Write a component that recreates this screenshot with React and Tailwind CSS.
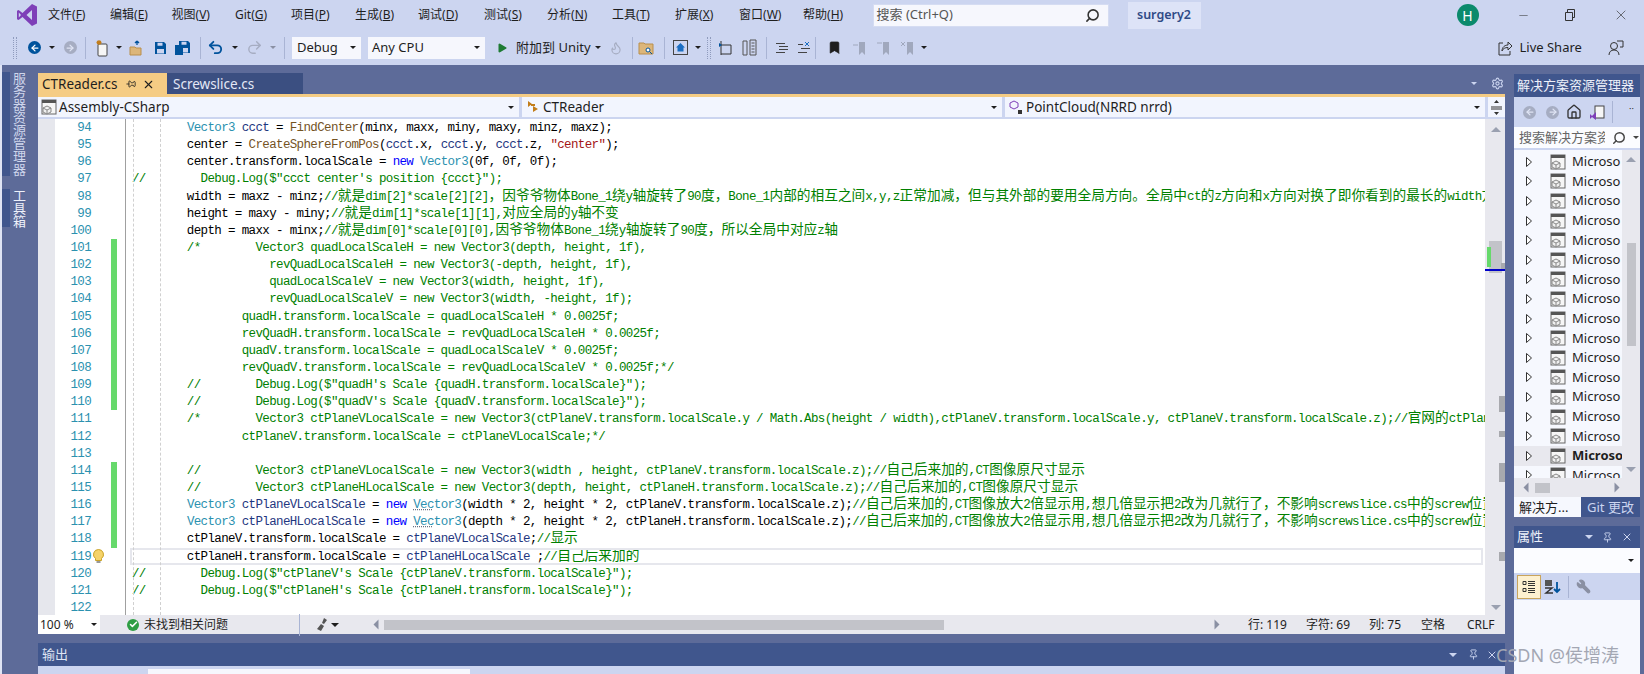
import React from 'react'
import { Search, X, Minus, ArrowLeft, ArrowRight, Undo2, Redo2, Play, Flame, Bookmark, Settings, Home, Wrench, Pin, Check } from 'lucide-react'

const UI = "font-['Noto_Sans','Noto_Sans_CJK_SC',sans-serif]"
const CJK = "font-['Noto_Sans_CJK_SC',sans-serif] text-[13.7px] leading-[12px] tracking-normal"

// token colours
const T = 'text-[#2b91af]'
const L = 'text-[#1f377f]'
const K = 'text-[#0000ff]'
const M = 'text-[#74531f]'
const S = 'text-[#a31515]'
const C = 'text-[#008000]'
const P = 'text-[#000000]'
const U = 'text-[#2b91af] underline decoration-dotted decoration-gray-500'

const I8 = '        '
const I16 = I8 + I8

const lines = [
  { n: 94, s: [[P, I8], [T, 'Vector3'], [P, ' '], [L, 'ccct'], [P, ' = '], [M, 'FindCenter'], [P, '(minx, maxx, miny, maxy, minz, maxz);']] },
  { n: 95, s: [[P, I8 + 'center = '], [M, 'CreateSphereFromPos'], [P, '('], [L, 'ccct'], [P, '.x, '], [L, 'ccct'], [P, '.y, '], [L, 'ccct'], [P, '.z, '], [S, '"center"'], [P, ');']] },
  { n: 96, s: [[P, I8 + 'center.transform.localScale = '], [K, 'new'], [P, ' '], [T, 'Vector3'], [P, '(0f, 0f, 0f);']] },
  { n: 97, s: [[C, '//' + I8 + 'Debug.Log($"ccct center\'s position {ccct}");']] },
  { n: 98, s: [[P, I8 + 'width = maxz - minz;'], [C, '//就是dim[2]*scale[2][2]，因爷爷物体Bone_1绕y轴旋转了90度，Bone_1内部的相互之间x,y,z正常加减，但与其外部的要用全局方向。全局中ct的z方向和x方向对换了即你看到的最长的width方向']] },
  { n: 99, s: [[P, I8 + 'height = maxy - miny;'], [C, '//就是dim[1]*scale[1][1],对应全局的y轴不变']] },
  { n: 100, s: [[P, I8 + 'depth = maxx - minx;'], [C, '//就是dim[0]*scale[0][0],因爷爷物体Bone_1绕y轴旋转了90度，所以全局中对应z轴']] },
  { n: 101, ch: 1, s: [[C, I8 + '/*' + I8 + 'Vector3 quadLocalScaleH = new Vector3(depth, height, 1f),']] },
  { n: 102, ch: 1, s: [[C, I16 + '    revQuadLocalScaleH = new Vector3(-depth, height, 1f),']] },
  { n: 103, ch: 1, s: [[C, I16 + '    quadLocalScaleV = new Vector3(width, height, 1f),']] },
  { n: 104, ch: 1, s: [[C, I16 + '    revQuadLocalScaleV = new Vector3(width, -height, 1f);']] },
  { n: 105, ch: 1, s: [[C, I16 + 'quadH.transform.localScale = quadLocalScaleH * 0.0025f;']] },
  { n: 106, ch: 1, s: [[C, I16 + 'revQuadH.transform.localScale = revQuadLocalScaleH * 0.0025f;']] },
  { n: 107, ch: 1, s: [[C, I16 + 'quadV.transform.localScale = quadLocalScaleV * 0.0025f;']] },
  { n: 108, ch: 1, s: [[C, I16 + 'revQuadV.transform.localScale = revQuadLocalScaleV * 0.0025f;*/']] },
  { n: 109, ch: 1, s: [[C, I8 + '//' + I8 + 'Debug.Log($"quadH\'s Scale {quadH.transform.localScale}");']] },
  { n: 110, ch: 1, s: [[C, I8 + '//' + I8 + 'Debug.Log($"quadV\'s Scale {quadV.transform.localScale}");']] },
  { n: 111, s: [[C, I8 + '/*' + I8 + 'Vector3 ctPlaneVLocalScale = new Vector3(ctPlaneV.transform.localScale.y / Math.Abs(height / width),ctPlaneV.transform.localScale.y, ctPlaneV.transform.localScale.z);//官网的ctPlaneV']] },
  { n: 112, s: [[C, I16 + 'ctPlaneV.transform.localScale = ctPlaneVLocalScale;*/']] },
  { n: 113, s: [] },
  { n: 114, ch: 1, s: [[C, I8 + '//' + I8 + 'Vector3 ctPlaneVLocalScale = new Vector3(width , height, ctPlaneV.transform.localScale.z);//自己后来加的,CT图像原尺寸显示']] },
  { n: 115, ch: 1, s: [[C, I8 + '//' + I8 + 'Vector3 ctPlaneHLocalScale = new Vector3(depth, height, ctPlaneH.transform.localScale.z);//自己后来加的,CT图像原尺寸显示']] },
  { n: 116, ch: 1, s: [[P, I8], [T, 'Vector3'], [P, ' '], [L, 'ctPlaneVLocalScale'], [P, ' = '], [K, 'new'], [P, ' '], [U, 'Vec'], [T, 'tor3'], [P, '(width * 2, height * 2, ctPlaneV.transform.localScale.z);'], [C, '//自己后来加的,CT图像放大2倍显示用,想几倍显示把2改为几就行了，不影响screwslice.cs中的screw位置']] },
  { n: 117, ch: 1, s: [[P, I8], [T, 'Vector3'], [P, ' '], [L, 'ctPlaneHLocalScale'], [P, ' = '], [K, 'new'], [P, ' '], [U, 'Vec'], [T, 'tor3'], [P, '(depth * 2, height * 2, ctPlaneH.transform.localScale.z);'], [C, '//自己后来加的,CT图像放大2倍显示用,想几倍显示把2改为几就行了，不影响screwslice.cs中的screw位置']] },
  { n: 118, ch: 1, s: [[P, I8 + 'ctPlaneV.transform.localScale = '], [L, 'ctPlaneVLocalScale'], [P, ';'], [C, '//显示']] },
  { n: 119, cur: 1, s: [[P, I8 + 'ctPlaneH.transform.localScale = '], [L, 'ctPlaneHLocalScale'], [P, ' ;'], [C, '//自己后来加的']] },
  { n: 120, s: [[C, '//' + I8 + 'Debug.Log($"ctPlaneV\'s Scale {ctPlaneV.transform.localScale}");']] },
  { n: 121, s: [[C, '//' + I8 + 'Debug.Log($"ctPlaneH\'s Scale {ctPlaneH.transform.localScale}");']] },
  { n: 122, s: [] },
]

const menus = [
  ['文件', 'F', 'w-[62px]'], ['编辑', 'E', 'w-[61.5px]'], ['视图', 'V', 'w-[63.5px]'], ['Git', 'G', 'w-[56px]'],
  ['项目', 'P', 'w-[64px]'], ['生成', 'B', 'w-[63px]'], ['调试', 'D', 'w-[66px]'], ['测试', 'S', 'w-[63px]'],
  ['分析', 'N', 'w-[65px]'], ['工具', 'T', 'w-[63px]'], ['扩展', 'X', 'w-[64px]'], ['窗口', 'W', 'w-[64px]'], ['帮助', 'H', 'w-[48px]'],
]

// split a string so Chinese runs get the full width font
const Code = ({ text }) =>
  text.split(/([\u3000-\u303f\u4e00-\u9fff\uff00-\uffef]+)/).map((part, i) =>
    i % 2 ? <span key={i} className={CJK}>{part}</span> : <span key={i}>{part}</span>
  )

const Caret = ({ className = '', color = 'border-t-[#1e1e1e]' }) => (
  <span className={`inline-block w-0 h-0 border-x-[3px] border-x-transparent border-t-[3px] shrink-0 ${color} ${className}`} />
)

const Sep = ({ className = '' }) => <span className={`w-px h-[22px] bg-[#a9b4d4] shrink-0 ${className}`} />

const Grip = ({ className = '' }) => (
  <span className={`w-[4px] h-[22px] shrink-0 border-x border-dotted border-[#8f9bbd] ${className}`} />
)

const VsLogo = () => (
  <svg width="22" height="24" viewBox="0 0 22 24">
    <path d="M16 1l5 2.4v17.2L16 23 6.5 14 2.6 17 1 16.2V7.8L2.6 7l3.9 3L16 1zM16 7l-5.500 5 5.500 5V7zM2.800 9.500v5L5 12 2.800 9.500z" fill="#7e3fb8" />
  </svg>
)

const FileCube = ({ dark }) => (
  <svg width="16" height="16" viewBox="0 0 16 16" fill="none">
    <rect x="1" y="1" width="14" height="14" fill="#f6f6f6" stroke={dark ? '#444' : '#666'} />
    <rect x="1" y="1" width="14" height="3" fill="#555" />
    <path d="M6 7l4 2v4l-4 2-4-2V9l4-2zM2 9l4 2 4-2M6 11v4" stroke="#888" fill="#efefef" />
  </svg>
)

const NewItem = () => (
  <svg width="14" height="18" viewBox="0 0 14 18" fill="none">
    <rect x="3" y="5" width="9" height="12" rx="1" stroke="#444" fill="#f6f6f6" />
    <path d="M4 1v5M1.500 3.500h5M2 2l4 3M6 2L2 5" stroke="#c27d1a" strokeWidth="1.200" />
  </svg>
)

const OpenFolder = () => (
  <svg width="16" height="17" viewBox="0 0 16 17">
    <path d="M1 8h5l1 1h5v7H1z" fill="#dcb67a" stroke="#b98f4d" />
    <path d="M8 6V2m0 0L6 4m2-2l2 2" stroke="#00539c" strokeWidth="1.300" fill="none" />
  </svg>
)

const Save = ({ x = 0 }) => (
  <path transform={`translate(${x} 0)`} d="M1 1h9l2 2v10H1zM3.500 1.800v3h5v-3zM3 8v4.500h7V8z" fill="#00539c" fillRule="evenodd" />
)

const MiniTool = ({ kind }) => {
  // small grey editor toolbar glyphs
  if (kind === 'lines') {
    return (
      <svg width="14" height="14" viewBox="0 0 14 14" stroke="#444" fill="none">
        <path d="M1 2.500h9M4 5.500h9M4 8.500h9M1 11.500h9" />
      </svg>
    )
  }
  if (kind === 'uncomment') {
    return (
      <svg width="14" height="14" viewBox="0 0 14 14" stroke="#444" fill="none">
        <path d="M1 3.500h5M4 7.500h9M1 11.500h9" />
        <path d="M8 1l4 4M12 1L8 5" stroke="#1b6ec2" />
      </svg>
    )
  }
  if (kind === 'flag') {
    return (
      <svg width="15" height="16" viewBox="0 0 15 16" fill="none" stroke="#333">
        <path d="M3 1v14M3 5h10v9H3" />
        <path d="M1 3l3 2-3 2z" fill="#00539c" stroke="none" />
      </svg>
    )
  }
  if (kind === 'doc') {
    return (
      <svg width="15" height="17" viewBox="0 0 15 17" fill="none" stroke="#555">
        <path d="M1 2h4v14H1zM8 1h6v15H8zM9.500 4h3M9.500 7h3M9.500 10h3M9.500 13h3" />
      </svg>
    )
  }
  if (kind === 'homebox') {
    return (
      <svg width="15" height="15" viewBox="0 0 15 15" fill="none">
        <rect x="0.500" y="0.500" width="14" height="14" stroke="#444" />
        <path d="M7.500 3L3 7.500h1.500v4h6v-4H12z" fill="#1b6ec2" />
      </svg>
    )
  }
  return (
    <svg width="16" height="16" viewBox="0 0 16 16" fill="none">
      <path d="M1 3h5l1 1h8v10H1z" fill="#dcb67a" stroke="#b98f4d" />
      <circle cx="10" cy="10" r="2" fill="#fff" stroke="#00539c" />
      <path d="M11.500 11.500L14 14" stroke="#00539c" />
    </svg>
  )
}

const GreyMark = ({ glyph }) => (
  <svg width="14" height="16" viewBox="0 0 14 16" fill="#a0a8bd">
    <path d="M7 2h6v13l-3-3-3 3z" />
    <path d={glyph} stroke="#a0a8bd" fill="none" />
  </svg>
)

const MenuBar = () => (
  <div className="h-[30px] flex items-center shrink-0">
    <div className="w-[48px] pl-[16px] shrink-0"><VsLogo /></div>
    <div className="w-[824.500px] flex shrink-0 text-[12px] text-[#1e1e1e]">
      {menus.map(([label, key, w]) => (
        <span key={key} className={`${w} shrink-0 whitespace-nowrap`}>
          {label}(<span className="underline">{key}</span>)
        </span>
      ))}
    </div>
    <div className="w-[236px] h-[23px] bg-[#f6f7fd] border border-[#d5dcf2] flex items-center justify-between pl-[3px] pr-[8px] text-[13px] text-[#555] shrink-0">
      <span>搜索 (Ctrl+Q)</span>
      <Search size={15} strokeWidth={2.500} className="text-[#333] -scale-x-100" />
    </div>
    <div className="ml-[19px] w-[73px] h-[27px] bg-[#dde3f7] flex items-center justify-center text-[12.500px] font-semibold text-[#2f4a86] shrink-0">surgery2</div>
    <div className="ml-[256px] w-[22px] h-[22px] rounded-full bg-[#0b8a6c] text-white text-[14px] flex items-center justify-center shrink-0">H</div>
    <Minus size={13} strokeWidth={1} className="ml-[38px] text-[#333] shrink-0" />
    <svg className="ml-[34px] shrink-0" width="12" height="12" viewBox="0 0 12 12" fill="none" stroke="#333"><path d="M1.500 3.500h7v8h-7zM3.500 3.500v-3h7v8h-2" /></svg>
    <X size={16} strokeWidth={1} className="ml-[37px] text-[#333] shrink-0" />
  </div>
)

const Toolbar = () => (
  <div className="h-[35px] flex items-center shrink-0 text-[13px] text-[#1e1e1e]">
    <Grip className="ml-[13px]" />
    <span className="ml-[11px] w-[13px] h-[13px] rounded-full bg-[#00539c] flex items-center justify-center shrink-0"><ArrowLeft size={10} strokeWidth={3} className="text-white" /></span>
    <Caret className="ml-[8px]" />
    <span className="ml-[8.500px] w-[13px] h-[13px] rounded-full bg-[#a6adc2] flex items-center justify-center shrink-0"><ArrowRight size={10} strokeWidth={3} className="text-[#dfe4f4]" /></span>
    <Sep className="ml-[8.500px]" />
    <span className="ml-[9px] shrink-0"><NewItem /></span>
    <Caret className="ml-[7px]" />
    <span className="ml-[7px] shrink-0"><OpenFolder /></span>
    <svg className="ml-[8.500px] shrink-0" width="13" height="14" viewBox="0 0 13 14"><Save /></svg>
    <svg className="ml-[8.500px] shrink-0" width="16" height="16" viewBox="0 0 16 16"><Save x={3} /><path d="M0 5h8v10H0z" fill="#00539c" /></svg>
    <Sep className="ml-[9px]" />
    <Undo2 size={17} strokeWidth={2.600} className="ml-[5.500px] text-[#00539c] shrink-0" />
    <Caret className="ml-[8.500px]" />
    <Redo2 size={17} strokeWidth={2} className="ml-[7.500px] text-[#a6adc2] shrink-0" />
    <Caret className="ml-[7.500px]" color="border-t-[#8a90a3]" />
    <Sep className="ml-[8px]" />
    <div className="ml-[7px] w-[69px] h-[22px] bg-[#f6f7fd] flex items-center justify-between pl-[5px] pr-[5px] shrink-0">Debug<Caret /></div>
    <div className="ml-[7px] w-[117px] h-[22px] bg-[#f6f7fd] flex items-center justify-between pl-[4px] pr-[5px] shrink-0">Any CPU<Caret /></div>
    <Play size={12} fill="#1e7b34" strokeWidth={0} className="ml-[11px] shrink-0" />
    <span className="ml-[8px] w-[75px] whitespace-nowrap shrink-0">附加到 Unity</span>
    <Caret className="ml-[4px]" />
    <Flame size={14} className="ml-[8px] text-[#a6adc2] shrink-0" />
    <Sep className="ml-[9px]" />
    <span className="ml-[5px] shrink-0"><MiniTool kind="search" /></span>
    <Sep className="ml-[10px]" />
    <span className="ml-[7.500px] shrink-0"><MiniTool kind="homebox" /></span>
    <Caret className="ml-[7px]" />
    <Grip className="ml-[6px]" />
    <span className="ml-[7.500px] shrink-0"><MiniTool kind="flag" /></span>
    <span className="ml-[8.500px] shrink-0"><MiniTool kind="doc" /></span>
    <Sep className="ml-[9px]" />
    <span className="ml-[8px] shrink-0"><MiniTool kind="lines" /></span>
    <span className="ml-[8px] shrink-0"><MiniTool kind="uncomment" /></span>
    <Sep className="ml-[4px]" />
    <Bookmark size={15} fill="#1e1e1e" strokeWidth={1} className="ml-[11.500px] text-[#1e1e1e] shrink-0" />
    <span className="ml-[9.500px] shrink-0"><GreyMark glyph="M1 5h5" /></span>
    <span className="ml-[10px] shrink-0"><GreyMark glyph="M1 3h5" /></span>
    <span className="ml-[10px] shrink-0"><GreyMark glyph="M1 2l4 4M5 2L1 6" /></span>
    <Caret className="ml-[7px]" />
    <svg className="ml-[571.500px] shrink-0" width="15" height="16" viewBox="0 0 15 16" fill="none" stroke="#333">
      <path d="M5 3H1v12h11v-4M4 11c0-4 3-6 6-6V2l4 4-4 4V7.500c-3 0-5 1-6 3.500z" />
    </svg>
    <span className="ml-[6.500px] w-[63px] whitespace-nowrap shrink-0">Live Share</span>
    <svg className="ml-[25px] shrink-0" width="16" height="16" viewBox="0 0 16 16" fill="none" stroke="#333">
      <circle cx="6" cy="6" r="3.500" />
      <path d="M1 15c0-3 2-5 5-5s5 2 5 5M9 1h6v6h-3" />
    </svg>
  </div>
)

const Rail = () => (
  <div className="w-[38px] shrink-0 pt-[7px] bg-[#5d6b99] border-l-2 border-[#dfe4f4] flex flex-col gap-[13px]">
    <div className="h-[104px] flex">
      <span className="w-[8px] bg-[#40568d]" />
      <span className="[writing-mode:vertical-rl] text-[13px] leading-none pl-[2px] text-[#cfd6ec] whitespace-nowrap">服务器资源管理器</span>
    </div>
    <div className="h-[38px] flex">
      <span className="w-[8px] bg-[#40568d]" />
      <span className="[writing-mode:vertical-rl] text-[13px] leading-none pl-[2px] text-[#eef1fa] whitespace-nowrap">工具箱</span>
    </div>
  </div>
)

const Tabs = () => (
  <div className="h-[29px] pt-[8px] flex items-stretch shrink-0 text-[13.500px]">
    <div className="w-[129px] bg-[#f5cc84] flex items-center pl-[4px] pt-[1px] text-[#1e1e1e]">
      <span className="w-[84px] whitespace-nowrap">CTReader.cs</span>
      <Pin size={10} className="rotate-90" />
      <X size={13} className="ml-[6px]" />
    </div>
    <div className="w-[136px] bg-[#3b4f81] flex items-center pl-[6px] pt-[1px] text-[#e4e8f6]">Screwslice.cs</div>
    <div className="flex-1 flex items-center justify-end pr-[1px]">
      <Caret className="mr-[14px]" color="border-t-[#ccd5f0]" />
      <Settings size={13} className="text-[#ccd5f0]" />
    </div>
  </div>
)

const NavDrop = ({ width, icon, label }) => (
  <div className={`${width} h-[20px] bg-[#f2f5fe] flex items-center text-[13.500px] text-[#1e1e1e] shrink-0 pl-[3px] pr-[5px]`}>
    {icon}
    <span className="ml-[2px] pt-[1px]">{label}</span>
    <Caret className="ml-auto" />
  </div>
)

const NavBar = () => (
  <div className="shrink-0 border-t-[3px] border-[#f5cc84]">
    <div className="h-[22px] bg-[#ccd5f0] flex gap-[3px] pb-[2px]">
      <NavDrop width="w-[481px]" label="Assembly-CSharp" icon={<FileCube />} />
      <NavDrop
        width="w-[480px]"
        label="CTReader"
        icon={
          <svg width="16" height="14" viewBox="0 0 16 14" fill="#c27d1a"><path d="M3 1l4 3-4 3zM8 6l5 3-5 3zM6 4h4v2H6z" /></svg>
        }
      />
      <NavDrop
        width="w-[480px]"
        label="PointCloud(NRRD nrrd)"
        icon={
          <svg width="16" height="15" viewBox="0 0 16 15" fill="none"><path d="M6 1l4 2v4l-4 2-4-2V3z" stroke="#7e3fb8" /><rect x="10" y="10" width="4" height="4" fill="#333" /></svg>
        }
      />
      <div className="flex-1 bg-[#f2f5fe] flex flex-col items-center justify-center text-[#1e1e1e]">
        <svg width="11" height="15" viewBox="0 0 11 15" fill="#333"><path d="M0 6.500h11v1H0zM0 8.500h11v1H0zM5.500 0l2.500 3H3zM5.500 15l2.500-3H3z" /></svg>
      </div>
    </div>
  </div>
)

const Bulb = () => (
  <svg width="11" height="15" viewBox="0 0 11 15">
    <path d="M5.500 0.500a5 5 0 013 9v2h-6v-2a5 5 0 013-9z" fill="#f5d36a" stroke="#c9a227" />
    <path d="M3.500 13h4" stroke="#777" strokeWidth="1.500" />
  </svg>
)

const CodeRow = ({ line }) => (
  <div className="h-[17.150px] flex">
    <div className="w-[17px] bg-[#e6e7ed] shrink-0" />
    <div className="w-[36px] shrink-0 text-right text-[#2b91af]">{line.n}</div>
    <div className="w-[20px] shrink-0 pl-[2px] flex items-center">{line.cur ? <Bulb /> : null}</div>
    <div className="w-[6px] shrink-0">
      {line.ch ? <div className="h-full bg-[#66d96b]" /> : null}
    </div>
    <div className="w-[8px] shrink-0" />
    <div className="relative flex-1 min-w-0 pl-[6px] border-l border-[#a0a0a0] overflow-hidden">
      {line.cur ? <div className="absolute left-[4px] right-[2px] inset-y-0 border-2 border-[#e6e7ed]" /> : null}
      {line.s.map(([cls, text], i) => (
        <span key={i} className={cls}><Code text={text} /></span>
      ))}
    </div>
  </div>
)

const EditorScroll = () => (
  <div className="relative w-[20px] shrink-0 bg-[#e8e8ee]">
    <Caret className="absolute left-[6px] top-[8px] rotate-180 border-x-[5px] border-t-[5px]" color="border-t-[#9aa0b0]" />
    <div className="absolute left-[4px] w-[13px] top-[122px] h-[32px] bg-[#c2c3c9]" />
    <div className="absolute left-[2px] w-[4px] top-[128px] h-[20px] bg-[#66d96b]" />
    <div className="absolute left-[16px] w-[4px] top-[144px] h-[7px] bg-[#a8a9ae]" />
    <div className="absolute left-0 w-[20px] top-[150px] h-[2px] bg-[#0000c8]" />
    <div className="absolute left-[14px] w-[6px] top-[277px] h-[16px] bg-[#a8a9ae]" />
    <div className="absolute left-[14px] w-[6px] top-[312px] h-[6px] bg-[#a8a9ae]" />
    <div className="absolute left-[14px] w-[6px] top-[344px] h-[19px] bg-[#a8a9ae]" />
    <div className="absolute left-[14px] w-[6px] top-[433px] h-[9px] bg-[#a8a9ae]" />
    <Caret className="absolute left-[6px] bottom-[5px] border-x-[5px] border-t-[5px]" color="border-t-[#9aa0b0]" />
  </div>
)

const Editor = () => (
  <div className="h-[496px] flex shrink-0 bg-white">
    <div className="relative flex-1 min-w-0 overflow-hidden font-['Liberation_Mono',monospace] text-[12.500px] tracking-[-0.643px] leading-[19px] whitespace-pre">
      {lines.map((line) => <CodeRow key={line.n} line={line} />)}
      <div className="absolute left-[95px] inset-y-0 border-l border-dashed border-[#d0d0d0]" />
      <div className="absolute left-[122px] inset-y-0 border-l border-dashed border-[#d0d0d0]" />
    </div>
    <EditorScroll />
  </div>
)

const StatusBar = () => (
  <div className="h-[19px] bg-[#e8e8ee] flex items-center shrink-0 text-[12px] text-[#1e1e1e]">
    <div className="w-[62px] h-full bg-white flex items-center justify-between pl-[2px] pr-[3px] shrink-0">100 %<Caret /></div>
    <span className="ml-[27px] w-[12px] h-[12px] rounded-full bg-[#2f9e44] flex items-center justify-center shrink-0"><Check size={9} strokeWidth={4} className="text-white" /></span>
    <span className="ml-[5px] w-[155px] shrink-0">未找到相关问题</span>
    <Sep className="h-[17px]" />
    <svg className="ml-[15px] shrink-0" width="13" height="14" viewBox="0 0 13 14" fill="#555"><path d="M9 0l3 2-3 4-2-1zM6 6l3 2-3 5-4-2z" /></svg>
    <Caret className="ml-[3px] border-x-[4px] border-t-[4px]" />
    <Caret className="ml-[32px] rotate-90 border-x-[5px] border-t-[5px]" color="border-t-[#8a90a3]" />
    <div className="ml-[3px] w-[560px] h-[10px] bg-[#c2c3c9] shrink-0" />
    <Caret className="ml-[268px] -rotate-90 border-x-[5px] border-t-[5px]" color="border-t-[#8a90a3]" />
    <span className="ml-[26px] w-[58px] shrink-0">行: 119</span>
    <span className="w-[63px] shrink-0">字符: 69</span>
    <span className="w-[52px] shrink-0">列: 75</span>
    <span className="w-[46px] shrink-0">空格</span>
    <span className="shrink-0">CRLF</span>
  </div>
)

const OutputPanel = () => (
  <div className="flex flex-col shrink-0 mt-[9px]">
    <div className="h-[23px] bg-[#40568d] flex items-center pl-[4px] text-[13px] text-[#dfe4f4]">
      <span>输出</span>
      <Caret className="ml-auto mr-[11px] border-x-[4px] border-t-[4px]" color="border-t-[#ccd5f0]" />
      <Pin size={11} className="mr-[7px] text-[#ccd5f0]" />
      <X size={12} className="mr-[7px] text-[#ccd5f0]" />
    </div>
    <div className="h-[8px] bg-[#ccd5f0] pt-[3px] pl-[110px]">
      <div className="w-[322px] h-full bg-[#f6f7fd]" />
    </div>
  </div>
)

const SolutionRow = ({ bold }) => (
  <div className={`h-[19.600px] flex items-center shrink-0 ${bold ? 'bg-[#e8e8ee] font-bold' : ''}`}>
    <svg className="ml-[12px] shrink-0" width="6" height="10" viewBox="0 0 6 10" fill="#fff" stroke="#333"><path d="M0.500 0.500l5 4.500-5 4.500z" /></svg>
    <span className="ml-[18px] shrink-0"><FileCube /></span>
    <span className="ml-[6px] text-[13px] text-[#1e1e1e] whitespace-nowrap leading-none">Microso</span>
  </div>
)

const SolutionPanel = () => (
  <div className="h-[443px] flex flex-col shrink-0">
    <div className="h-[23px] bg-[#40568d] flex items-center pl-[3px] text-[13px] text-[#eef1fa] shrink-0 whitespace-nowrap">解决方案资源管理器</div>
    <div className="h-[30px] bg-[#ccd5f0] flex items-center pl-[9px] shrink-0">
      <span className="w-[13px] h-[13px] rounded-full bg-[#a6adc2] flex items-center justify-center"><ArrowLeft size={10} strokeWidth={3} className="text-[#dfe4f4]" /></span>
      <span className="ml-[10px] w-[13px] h-[13px] rounded-full bg-[#a6adc2] flex items-center justify-center"><ArrowRight size={10} strokeWidth={3} className="text-[#dfe4f4]" /></span>
      <Home size={16} className="ml-[7px] text-[#333]" />
      <svg className="ml-[7px]" width="16" height="15" viewBox="0 0 16 15"><rect x="6" y="1" width="9" height="12" fill="#f6f6f6" stroke="#444" /><path d="M1 9l2 2 4-4v8l-4-3-2 2z" fill="#7e3fb8" /></svg>
      <Sep className="ml-[7px]" />
      <span className="ml-[16px] text-[9px] leading-none text-[#333] -mt-[8px]">··</span>
    </div>
    <div className="h-[23px] bg-[#fbfcff] flex items-center pl-[5px] text-[13px] text-[#666] shrink-0 border-b-2 border-[#ccd5f0]">
      <span className="w-[86px] overflow-hidden whitespace-nowrap">搜索解决方案资源</span>
      <Search size={14} strokeWidth={2.500} className="ml-[7px] text-[#444] -scale-x-100" />
      <Caret className="ml-[7px]" color="border-t-[#444]" />
    </div>
    <div className="h-[328px] flex shrink-0 overflow-hidden">
      <div className="w-[108px] bg-[#f6f8fe] flex flex-col pt-[2px] overflow-hidden">
        {Array.from({ length: 17 }).map((_, i) => <SolutionRow key={i} bold={i === 15} />)}
      </div>
      <div className="relative flex-1 bg-[#e8e8ee]">
        <Caret className="absolute left-[4px] top-[7px] rotate-180 border-x-[5px] border-t-[5px]" color="border-t-[#9aa0b0]" />
        <div className="absolute left-[5px] w-[9px] top-[93px] h-[103px] bg-[#c2c3c9]" />
        <Caret className="absolute left-[4px] bottom-[6px] border-x-[5px] border-t-[5px]" color="border-t-[#9aa0b0]" />
      </div>
    </div>
    <div className="h-[19px] bg-[#e8e8ee] flex items-center shrink-0">
      <Caret className="ml-[7px] rotate-90 border-x-[5px] border-t-[5px]" color="border-t-[#8a90a3]" />
      <div className="ml-[4px] w-[15px] h-[10px] bg-[#c2c3c9]" />
      <Caret className="ml-[62px] -rotate-90 border-x-[5px] border-t-[5px]" color="border-t-[#8a90a3]" />
    </div>
    <div className="h-[20px] flex text-[13px] shrink-0">
      <div className="w-[67px] bg-[#f6f8fe] pl-[5px] text-[#1e1e1e] leading-[20px] whitespace-nowrap">解决方...</div>
      <div className="flex-1 bg-[#40568d] pl-[6px] text-[#ccd5f0] leading-[20px] whitespace-nowrap">Git 更改</div>
    </div>
  </div>
)

const PropertiesPanel = () => (
  <div className="flex-1 mt-[9px] flex flex-col bg-[#f6f8fe]">
    <div className="h-[22px] bg-[#40568d] flex items-center pl-[3px] text-[13px] text-[#eef1fa] shrink-0">
      <span>属性</span>
      <Caret className="ml-auto mr-[9px] border-x-[4px] border-t-[4px]" color="border-t-[#ccd5f0]" />
      <Pin size={11} className="mr-[8px] text-[#ccd5f0]" />
      <X size={12} className="mr-[7px] text-[#ccd5f0]" />
    </div>
    <div className="h-[25px] bg-[#fbfcff] flex items-center justify-end pr-[6px] shrink-0"><Caret /></div>
    <div className="h-[27px] bg-[#ccd5f0] flex items-center pl-[3px] shrink-0">
      <div className="w-[24px] h-[24px] bg-[#fdf0d0] border border-[#c9a45c] flex items-center justify-center">
        <svg width="14" height="14" viewBox="0 0 14 14" fill="none" stroke="#333"><path d="M1 1.500h3v3H1zM1 8.500h3v3H1zM6 1.500h7M6 3.500h7M6 5.500h7M6 8.500h7M6 10.500h7M6 12.500h7" /></svg>
      </div>
      <svg className="ml-[3px]" width="17" height="16" viewBox="0 0 17 16" fill="none"><rect x="1" y="1" width="7" height="6" fill="#555" /><path d="M1 9h7L2 14h7" stroke="#333" strokeWidth="1.500" /><path d="M13 3v10m-3-3l3 3 3-3" stroke="#00539c" strokeWidth="1.800" /></svg>
      <Sep className="ml-[7px]" />
      <Wrench size={15} className="ml-[7px] text-[#8a90a3] -scale-x-100" fill="#8a90a3" />
    </div>
  </div>
)

export default function App() {
  return (
    <div className={`relative w-[1644px] h-[674px] overflow-hidden flex flex-col bg-[#ccd5f0] ${UI}`}>
      <MenuBar />
      <Toolbar />
      <div className="flex-1 min-h-0 flex bg-[#5d6b99]">
        <Rail />
        <div className="w-[1467px] shrink-0 flex flex-col">
          <Tabs />
          <NavBar />
          <Editor />
          <StatusBar />
          <OutputPanel />
        </div>
        <div className="w-[126px] ml-[9px] shrink-0 mt-[9px] flex flex-col">
          <SolutionPanel />
          <PropertiesPanel />
        </div>
      </div>
      <span className="absolute left-[1496px] top-[642px] text-[18px] text-[#a3a7b3] whitespace-nowrap">CSDN @侯增涛</span>
    </div>
  )
}
